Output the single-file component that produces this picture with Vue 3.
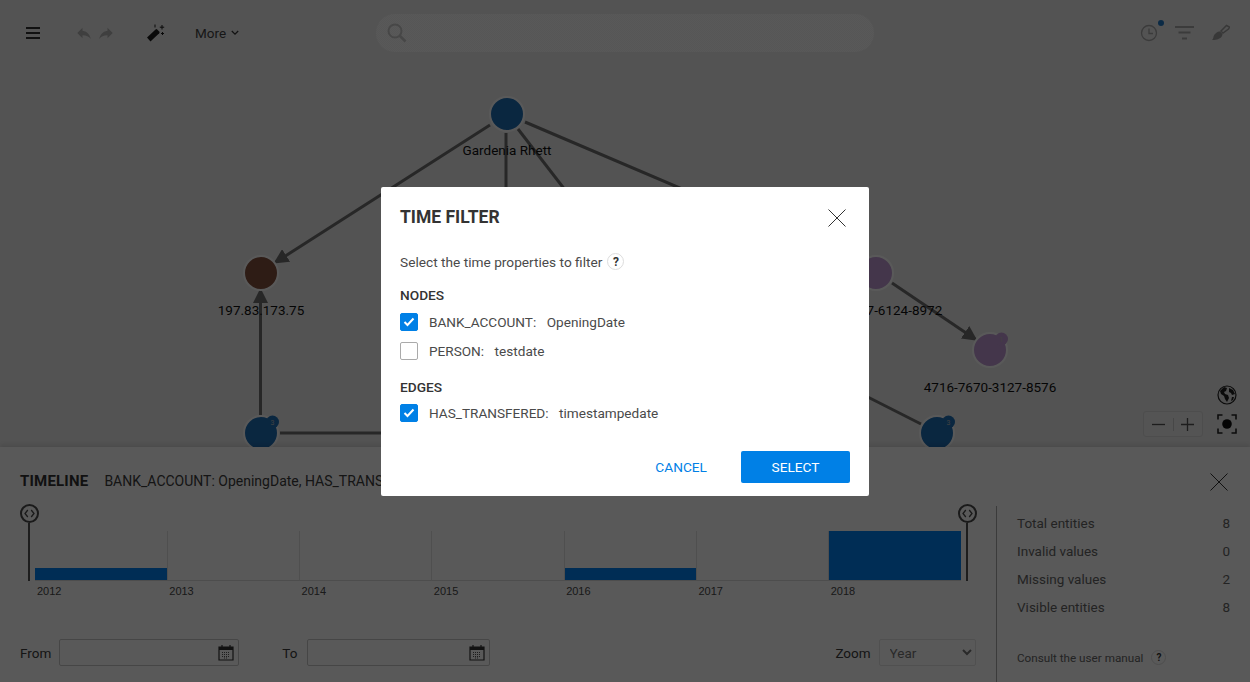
<script setup>
const years = [
  { y: 2012, h: 12 }, { y: 2013, h: 0 }, { y: 2014, h: 0 }, { y: 2015, h: 0 },
  { y: 2016, h: 12 }, { y: 2017, h: 0 }, { y: 2018, h: 49 }
]
const stats = [
  ['Total entities', 8], ['Invalid values', 0], ['Missing values', 2], ['Visible entities', 8]
]
const nodes = [
  { x: 507, y: 114, c: '#1f70b8', label: 'Gardenia Rhett', ly: 155 },
  { x: 261, y: 273, c: '#84503e', label: '197.83.173.75', ly: 315 },
  { x: 876, y: 273, c: '#c29cd6', label: '4532-7947-6124-8972', ly: 315 },
  { x: 990, y: 350, c: '#c29cd6', label: '4716-7670-3127-8576', ly: 392, badge: '1', bc: '#c29cd6' },
  { x: 261, y: 433, c: '#1f70b8', badge: '3', bc: '#1f70b8' },
  { x: 937, y: 433, c: '#1f70b8', badge: '3', bc: '#1f70b8' }
]
const edges = [
  [490, 125, 276, 262], [506, 133, 506, 300], [518, 129, 650, 300], [525, 122, 832, 253],
  [260.5, 415, 260.5, 291], [280, 433, 500, 433], [892, 283, 975, 339], [850, 388, 921, 424]
]
</script>

<template>
  <div class="app">
    <header class="topbar">
      <div class="tools">
        <svg class="menu" width="14" height="12" viewBox="0 0 14 12"><path d="M0 1h14M0 6h14M0 11h14" stroke="#333" stroke-width="2"/></svg>
        <div class="history">
          <svg width="18" height="18" viewBox="0 0 24 24"><path fill="#b4b4b4" d="M10 9V5l-7 7 7 7v-4.1c5 0 8.500 1.600 11 5.100-1-5-4-10-11-11z"/></svg>
          <svg width="18" height="18" viewBox="0 0 24 24"><path fill="#b4b4b4" d="M14 9V5l7 7-7 7v-4.1c-5 0-8.500 1.600-11 5.100 1-5 4-10 11-11z"/></svg>
        </div>
        <svg class="wand" width="19" height="18" viewBox="0 0 19 18">
          <path fill="#1c1c1c" d="M0 13.500 8.500 5.500l1.200-.5 3 3-.5 1.200L3.500 17.500z"/>
          <path stroke="#1c1c1c" stroke-width="1" d="M15 1v4.500M12.800 3.200h4.400M15.500 8v3M14 9.500h3M8 .5v3"/>
        </svg>
        <button class="more">More
          <svg width="8" height="6" viewBox="0 0 8 6"><path d="M.8 1l3.200 3.200L7.200 1" fill="none" stroke="#333" stroke-width="1.300"/></svg>
        </button>
      </div>
      <div class="search">
        <svg width="22" height="22" viewBox="0 0 22 22"><circle cx="9" cy="9" r="6.500" fill="none" stroke="#ccc" stroke-width="2"/><path d="M13.500 13.500l6 6" stroke="#ccc" stroke-width="2.500"/></svg>
      </div>
      <div class="rtools">
        <div class="clock">
          <svg width="18" height="18" viewBox="0 0 18 18"><circle cx="9" cy="9" r="7.500" fill="none" stroke="#a8a8a8" stroke-width="1.300"/><path d="M9 4.500V9.500h4" fill="none" stroke="#a8a8a8" stroke-width="1.300"/></svg>
          <span class="dot"></span>
        </div>
        <svg width="19" height="14" viewBox="0 0 19 14"><path d="M0 1h19M3.500 6.500h12M7 12.500h5" stroke="#a8a8a8" stroke-width="2"/></svg>
        <svg width="18" height="17" viewBox="0 0 18 17"><path fill="#a0a0a0" d="M0 16c1.500-1 1-3.500 2.500-5.500S6 7 8 7.500l2.500 2.500c0 3-3 5-5.500 5.500-2 .4-3.500.5-5 .5z"/><path fill="none" stroke="#a0a0a0" stroke-width="1.500" d="M9 7l5.500-5.500 3 1.500-1 2-5.500 4z"/></svg>
      </div>
    </header>

    <section class="canvas">
      <svg class="graph" width="1250" height="382" viewBox="0 65 1250 382">
        <defs>
          <marker id="arr" markerWidth="5" markerHeight="5" refX="4" refY="2.500" orient="auto">
            <path d="M0 0L5 2.500 0 5z" fill="#707070"/>
          </marker>
        </defs>
        <line v-for="(e, i) in edges" :key="i" :x1="e[0]" :y1="e[1]" :x2="e[2]" :y2="e[3]"
          stroke="#707070" stroke-width="3" :marker-end="i === 0 || i === 4 || i === 6 ? 'url(#arr)' : null"/>
        <g v-for="n in nodes" :key="n.x + '-' + n.y">
          <circle :cx="n.x" :cy="n.y" r="17" :fill="n.c" stroke="#fff" stroke-width="2"/>
          <circle v-if="n.badge" :cx="n.x + 11.500" :cy="n.y - 11" r="6.500" :fill="n.bc"/>
          <text v-if="n.badge" :x="n.x + 11.500" :y="n.y - 8.500" class="badge">{{ n.badge }}</text>
          <text v-if="n.label" :x="n.x" :y="n.ly" class="nlabel" text-anchor="middle">{{ n.label }}</text>
        </g>
      </svg>
      <div class="mapctl">
        <svg width="20" height="20" viewBox="0 0 20 20" class="globe">
          <circle cx="10" cy="10" r="9" fill="#e4e4e4" stroke="#222" stroke-width="1.200"/>
          <path fill="#222" d="M3 6l4-4 3 1-1 3-2 1 1 2 3 1 1 3-2 4-2-3-1-3-3-2zM12 3l4 2 2 4-3 1-1-2-2-1zM15 12l2 0-1 3-2 1z"/>
        </svg>
        <div class="ctlrow">
          <div class="zoombox">
            <svg width="13" height="13" viewBox="0 0 13 13"><path d="M0 6.500h13" stroke="#555" stroke-width="1.300"/></svg>
            <i></i>
            <svg width="13" height="13" viewBox="0 0 13 13"><path d="M0 6.500h13M6.500 0v13" stroke="#555" stroke-width="1.300"/></svg>
          </div>
          <svg width="20" height="20" viewBox="0 0 20 20">
            <circle cx="10" cy="10" r="4.800" fill="#111"/>
            <path d="M1 5.500V1h4.500M14.500 1H19v4.500M19 14.500V19h-4.500M5.500 19H1v-4.500" fill="none" stroke="#222" stroke-width="1.600"/>
          </svg>
        </div>
      </div>
    </section>

    <section class="timeline">
      <div class="tl-main">
        <div class="tl-head">
          <h2>TIMELINE</h2>
          <span>BANK_ACCOUNT: OpeningDate, HAS_TRANSFERED: timestampedate</span>
        </div>
        <div class="chart">
          <div class="handle left">
            <svg width="19" height="19" viewBox="0 0 19 19"><circle cx="9.500" cy="9.500" r="8.500" fill="#fff" stroke="#4a4a4a" stroke-width="2"/><path d="M7.800 6L5 9.500 7.800 13M11.200 6L14 9.500 11.200 13" fill="none" stroke="#4a4a4a" stroke-width="1.300"/></svg>
          </div>
          <div class="handle right">
            <svg width="19" height="19" viewBox="0 0 19 19"><circle cx="9.500" cy="9.500" r="8.500" fill="#fff" stroke="#4a4a4a" stroke-width="2"/><path d="M7.800 6L5 9.500 7.800 13M11.200 6L14 9.500 11.200 13" fill="none" stroke="#4a4a4a" stroke-width="1.300"/></svg>
          </div>
          <div class="cells">
            <div v-for="c in years" :key="c.y" class="cell">
              <div class="plot">
                <div class="bar" :style="{ height: c.h + 'px' }"></div>
              </div>
              <span class="yr">{{ c.y }}</span>
            </div>
          </div>
        </div>
        <div class="tl-form">
          <label class="fld">From</label>
          <div class="date w1">
            <input type="text" />
            <svg width="16" height="17" viewBox="0 0 16 17"><path d="M1 3h14v13H1z" fill="none" stroke="#333" stroke-width="1.200"/><path d="M1 3h14v3H1z" fill="#333"/><path d="M4 1v3M12 1v3" stroke="#333" stroke-width="1.200"/><path d="M4 8.500h8M4 10.500h8M4 12.500h8M6 14h4" stroke="#555" stroke-width="1" stroke-dasharray="1 1"/></svg>
          </div>
          <label class="fld to">To</label>
          <div class="date w2">
            <input type="text" />
            <svg width="16" height="17" viewBox="0 0 16 17"><path d="M1 3h14v13H1z" fill="none" stroke="#333" stroke-width="1.200"/><path d="M1 3h14v3H1z" fill="#333"/><path d="M4 1v3M12 1v3" stroke="#333" stroke-width="1.200"/><path d="M4 8.500h8M4 10.500h8M4 12.500h8M6 14h4" stroke="#555" stroke-width="1" stroke-dasharray="1 1"/></svg>
          </div>
          <label class="fld zoomlbl">Zoom</label>
          <select class="zsel"><option>Year</option></select>
        </div>
      </div>
      <aside class="tl-side">
        <button class="x side-x" aria-label="Close">
          <svg width="18" height="18" viewBox="0 0 18 18"><path d="M.5.5l17 17M17.500.5l-17 17" stroke="#333" stroke-width="1"/></svg>
        </button>
        <div class="stats">
          <div v-for="s in stats" :key="s[0]" class="stat"><span>{{ s[0] }}</span><span>{{ s[1] }}</span></div>
        </div>
        <div class="manual">
          <span>Consult the user manual</span>
          <span class="help small">?</span>
        </div>
      </aside>
    </section>

    <div class="overlay">
      <div class="dialog">
        <div class="d-head">
          <h1>TIME FILTER</h1>
          <button class="x" aria-label="Close">
            <svg width="18" height="18" viewBox="0 0 18 18"><path d="M.5.5l17 17M17.500.5l-17 17" stroke="#333" stroke-width="1"/></svg>
          </button>
        </div>
        <p class="intro">Select the time properties to filter <span class="help">?</span></p>
        <h3>NODES</h3>
        <div class="opt">
          <span class="cb on"><svg width="12" height="10" viewBox="0 0 12 10"><path d="M1.500 5l3 3 6-6.500" fill="none" stroke="#fff" stroke-width="2"/></svg></span>
          <span class="k">BANK_ACCOUNT:</span><span>OpeningDate</span>
        </div>
        <div class="opt">
          <span class="cb"></span>
          <span class="k">PERSON:</span><span>testdate</span>
        </div>
        <h3 class="edges">EDGES</h3>
        <div class="opt">
          <span class="cb on"><svg width="12" height="10" viewBox="0 0 12 10"><path d="M1.500 5l3 3 6-6.500" fill="none" stroke="#fff" stroke-width="2"/></svg></span>
          <span class="k">HAS_TRANSFERED:</span><span>timestampedate</span>
        </div>
        <div class="d-actions">
          <button class="cancel">CANCEL</button>
          <button class="select">SELECT</button>
        </div>
      </div>
    </div>
  </div>
</template>

<style>
html, body { margin: 0; overflow: hidden; }
</style>

<style scoped>
.app {
  width: 1250px; height: 682px; position: relative; overflow: hidden;
  display: flex; flex-direction: column;
  background: #eee; color: #444;
  font-family: Roboto, "Liberation Sans", sans-serif;
}
button { font-family: inherit; background: none; border: 0; padding: 0; cursor: pointer; }
h1, h2, h3, p { margin: 0; }

.topbar { height: 65px; flex: none; display: flex; align-items: center; padding-left: 26px; padding-right: 20px; box-sizing: border-box; }
.tools { display: flex; align-items: center; width: 350px; }
.menu { margin-right: 35px; }
.history { display: flex; gap: 4px; margin-right: 32px; }
.wand { margin-right: 29px; }
.more { display: flex; align-items: center; gap: 5px; color: #444; font-size: 13.5px; }
.search { width: 498px; height: 38px; border-radius: 19px; background: repeating-conic-gradient(#fff 0 25%, #f5f5f5 0 50%) 0 0 / 2px 2px; display: flex; align-items: center; padding-left: 10px; box-sizing: border-box; margin-top: 1px; }
.rtools { margin-left: auto; display: flex; align-items: center; gap: 18px; }
.clock { position: relative; display: flex; margin-right: -1px; }
.dot { position: absolute; right: -6px; top: -4px; width: 6px; height: 6px; border-radius: 50%; background: #2278c5; }

.canvas { flex: 1; position: relative; min-height: 0; }
.graph { position: absolute; left: 0; top: 0; }
.nlabel { font-size: 13.5px; fill: #111; font-family: Roboto, sans-serif; }
.badge { font-size: 7px; fill: #bbb; text-anchor: middle; font-family: Roboto, sans-serif; }
.mapctl { position: absolute; right: 13px; bottom: 10px; display: flex; flex-direction: column; align-items: flex-end; gap: 6px; }
.ctlrow { display: flex; align-items: center; gap: 14px; }
.zoombox { width: 60px; height: 26px; border: 1px solid #ddd; border-radius: 3px; display: flex; align-items: center; justify-content: space-between; padding: 0 8px; background: #f0f0f0; box-sizing: border-box; }
.zoombox i { width: 1px; height: 13px; background: #ccc; }

.timeline { height: 235px; flex: none; background: #fff; display: flex; box-shadow: 0 -2px 5px rgba(0,0,0,.12); position: relative; }
.tl-main { width: 996px; flex: none; padding: 24px 0 0 20px; box-sizing: border-box; display: flex; flex-direction: column; }
.tl-head { display: flex; align-items: center; height: 20px; gap: 16px; white-space: nowrap; }
.tl-head h2 { font-size: 15px; font-weight: 700; color: #333; letter-spacing: .2px; }
.tl-head span { font-size: 14px; color: #3c3c3c; }
.chart { position: relative; margin-top: 40px; margin-left: 14.600px; width: 926px; }
.cells { display: grid; grid-template-columns: repeat(7, 1fr); }
.plot { height: 49px; border-bottom: 1px solid #ddd; display: flex; align-items: flex-end; }
.cell + .cell .plot { border-left: 1px solid #e2e2e2; }
.bar { width: 100%; background: #0081f3; }
.yr { display: block; font-size: 11px; color: #4a4a4a; padding: 4px 0 0 2.400px; line-height: 13px; font-family: "Liberation Sans", sans-serif; }
.handle { position: absolute; top: -27px; display: flex; flex-direction: column; align-items: center; width: 19px; }
.handle::after { content: ""; width: 2px; height: 58px; background: #555; }
.handle.left { left: -15px; }
.handle.right { right: -16px; }

.tl-form { margin-top: 41px; display: flex; align-items: center; height: 27px; }
.fld { font-size: 13.5px; color: #3c3c3c; }
.date { margin-left: 8px; height: 27px; box-sizing: border-box; border: 1px solid #c9c9c9; border-radius: 2px; display: flex; align-items: center; padding-right: 4px; }
.date input { flex: 1; min-width: 0; border: 0; background: none; outline: none; }
.w1 { width: 180px; }
.w2 { width: 183px; margin-left: 10px; }
.to { margin-left: 43px; }
.zoomlbl { margin-left: 345px; }
.zsel { margin-left: 8px; width: 97px; height: 27px; border: 1px solid #e6e6e6; border-radius: 2px; background: #fff; color: #777; font-family: Roboto, sans-serif; font-size: 13.5px; padding-left: 6px; }

.tl-side { flex: 1; border-left: 1px solid #aaa; margin-top: 59px; padding: 0 20px; position: relative; display: flex; flex-direction: column; }
.side-x { position: absolute; right: 22px; top: -33px; display: flex; }
.stats { display: flex; flex-direction: column; padding-top: 3px; }
.stat { display: flex; justify-content: space-between; font-size: 13.5px; line-height: 28px; color: #666; }
.manual { margin-top: 29px; display: flex; align-items: center; gap: 8px; font-size: 11.7px; color: #666; }

.help { display: inline-flex; width: 17px; height: 17px; box-sizing: border-box; border: 1px solid #ddd; border-radius: 50%; align-items: center; justify-content: center; font-size: 12px; font-weight: 700; color: #333; margin-left: 2px; }
.help.small { width: 15px; height: 15px; font-size: 10px; margin-left: 0; }

.overlay { position: absolute; inset: 0; background: rgba(0,0,0,.65); display: flex; align-items: center; justify-content: center; }
.dialog { width: 488px; height: 309px; box-sizing: border-box; background: #fff; border-radius: 2px; padding: 21px 19px 13px; display: flex; flex-direction: column; color: #444; }
.d-head { display: flex; justify-content: space-between; align-items: center; height: 20px; margin-bottom: 24px; padding-right: 4px; }
.d-head h1 { font-size: 17.500px; font-weight: 700; color: #333; margin-top: -2px; }
.x { display: flex; }
.intro { font-size: 13.7px; display: flex; align-items: center; gap: 3px; height: 20px; color: #4a4a4a; }
h3 { font-size: 13.7px; font-weight: 500; color: #333; margin-top: 14px; height: 18px; line-height: 18px; }
h3.edges { margin-top: 18px; }
.opt { display: flex; align-items: center; height: 18px; margin-top: 11px; font-size: 13.6px; color: #4a4a4a; }
h3 + .opt { margin-top: 9px; }
h3.edges + .opt { margin-top: 8px; }
.k { margin-right: 10.500px; }
.cb { width: 18px; height: 18px; box-sizing: border-box; border: 1px solid #aaa; border-radius: 2px; margin-right: 11px; display: flex; align-items: center; justify-content: center; }
.cb.on { background: #0080e6; border-color: #0080e6; }
.d-actions { margin-top: auto; display: flex; justify-content: flex-end; align-items: center; gap: 34px; }
.cancel { color: #0080e6; font-size: 13.7px; }
.select { width: 109px; height: 32px; background: #0080e6; color: #fff; font-size: 13.7px; border-radius: 2px; }
</style>
